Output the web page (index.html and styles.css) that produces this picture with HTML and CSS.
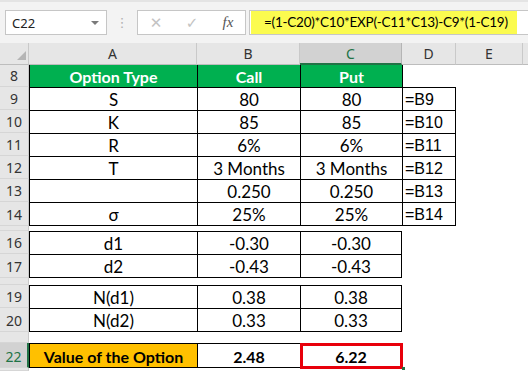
FILE: index.html
```html
<!DOCTYPE html>
<html lang="en">
<head>
    <meta charset="UTF-8">
    <title>Option Value</title>
    <link rel="stylesheet" href="styles.css">
</head>
<body>
    <div class="ribbon">
        <div class="namebox"><span>C22</span><span class="caret"></span></div>
        <div class="grip">⋮</div>
        <div class="fbtns">
            <span class="btn-x">✕</span>
            <span class="btn-ok">✓</span>
            <span class="btn-fx">fx</span>
        </div>
        <div class="fbar"><span class="ftext">=(1-C20)*C10*EXP(-C11*C13)-C9*(1-C19)</span></div>
    </div>

    <div class="sheet">
        <!-- column headers -->
        <div class="corner"><svg width="9" height="9" viewBox="0 0 9 9"><path d="M9 0 L9 9 L0 9 Z" fill="#b5b5b5"/></svg></div>
        <div class="ch">A</div>
        <div class="ch">B</div>
        <div class="ch sel">C</div>
        <div class="ch">D</div>
        <div class="ch">E</div>
        <div class="ch last"></div>

        <!-- 8 -->
        <div class="rh">8</div>
        <div class="c hd bl">Option Type</div>
        <div class="c hd bl">Call</div>
        <div class="c hd bl">Put</div>
        <div class="bl"></div><div></div><div></div>

        <div class="rh">9</div>
        <div class="c bd">S</div>
        <div class="c bd">80</div>
        <div class="c bd">80</div>
        <div class="d bd br">=B9</div><div></div><div></div>

        <div class="rh">10</div>
        <div class="c bd">K</div>
        <div class="c bd">85</div>
        <div class="c bd">85</div>
        <div class="d bd br">=B10</div><div></div><div></div>

        <div class="rh">11</div>
        <div class="c bd">R</div>
        <div class="c bd">6%</div>
        <div class="c bd">6%</div>
        <div class="d bd br">=B11</div><div></div><div></div>

        <div class="rh">12</div>
        <div class="c bd">T</div>
        <div class="c bd">3 Months</div>
        <div class="c bd">3 Months</div>
        <div class="d bd br">=B12</div><div></div><div></div>

        <div class="rh">13</div>
        <div class="c bd"></div>
        <div class="c bd">0.250</div>
        <div class="c bd">0.250</div>
        <div class="d bd br">=B13</div><div></div><div></div>

        <div class="rh">14</div>
        <div class="c bd bb">σ</div>
        <div class="c bd bb">25%</div>
        <div class="c bd bb">25%</div>
        <div class="d bd br bb">=B14</div><div></div><div></div>

        <div class="rh tiny"></div>
        <div></div><div></div><div></div><div></div><div></div><div></div>

        <div class="rh">16</div>
        <div class="c bd">d1</div>
        <div class="c bd">-0.30</div>
        <div class="c bd br">-0.30</div>
        <div></div><div></div><div></div>

        <div class="rh">17</div>
        <div class="c bd bb">d2</div>
        <div class="c bd bb">-0.43</div>
        <div class="c bd br bb">-0.43</div>
        <div></div><div></div><div></div>

        <div class="rh tiny"></div>
        <div></div><div></div><div></div><div></div><div></div><div></div>

        <div class="rh">19</div>
        <div class="c bd">N(d1)</div>
        <div class="c bd">0.38</div>
        <div class="c bd br">0.38</div>
        <div></div><div></div><div></div>

        <div class="rh">20</div>
        <div class="c bd bb">N(d2)</div>
        <div class="c bd bb">0.33</div>
        <div class="c bd br bb">0.33</div>
        <div></div><div></div><div></div>

        <div class="rh tiny"></div>
        <div></div><div></div><div></div><div></div><div></div><div></div>

        <div class="rh sel">22</div>
        <div class="c bd bb total">Value of the Option</div>
        <div class="c bd bb strong">2.48</div>
        <div class="c bd br bb strong active">6.22<span class="selbox"></span><span class="handle"></span></div>
        <div></div><div></div><div></div>

        <div class="rh"></div>
        <div></div><div></div><div></div><div></div><div></div><div></div>
    </div>
</body>
</html>
```

FILE: styles.css
```css
body {
    margin: 0;
    background: #fff;
    font-family: 'Lato', 'Liberation Sans', sans-serif;
    color: #000;
    overflow: hidden;
}

/* barra de fórmulas */
.ribbon {
    display: flex;
    align-items: flex-start;
    height: 43px;
    box-sizing: border-box;
    padding: 8px 0 0 5px;
    background: #f3f3f3;
    border-top: 2px solid #e4e4e4;
}

.namebox {
    width: 102px;
    height: 25px;
    box-sizing: border-box;
    border: 1px solid #c6c6c6;
    background: #fff;
    display: flex;
    align-items: center;
    justify-content: space-between;
    padding: 0 7px 0 6px;
    font-family: 'Noto Sans', sans-serif;
    font-size: 13px;
    color: #222;
}

.caret {
    width: 0;
    height: 0;
    border-left: 4px solid transparent;
    border-right: 4px solid transparent;
    border-top: 4px solid #7a7a7a;
}

.grip {
    width: 30px;
    height: 25px;
    line-height: 25px;
    text-align: center;
    color: #b0b0b0;
    font-family: 'DejaVu Sans', sans-serif;
    font-size: 13px;
}

.fbtns {
    width: 109px;
    height: 25px;
    box-sizing: border-box;
    border: 1px solid #c6c6c6;
    background: #fff;
    display: grid;
    grid-template-columns: 36px 36px 36px;
    align-items: center;
    justify-items: center;
}

.btn-x,
.btn-ok {
    color: #c3c3c3;
    font-family: 'DejaVu Sans', sans-serif;
    font-size: 15px;
}

.btn-fx {
    font-family: 'Liberation Serif', serif;
    font-style: italic;
    font-size: 15px;
    color: #555;
}

.fbar {
    flex: 1;
    height: 25px;
    margin-left: 3px;
    box-sizing: border-box;
    border: 1px solid #c6c6c6;
    border-right: none;
    background: #fff;
    padding-left: 1px;
}

.ftext {
    display: block;
    width: 266px;
    height: 23px;
    box-sizing: border-box;
    line-height: 23px;
    padding-left: 13px;
    background: #fbfb4f;
    font-size: 13.5px;
    letter-spacing: -0.25px;
    white-space: nowrap;
    overflow: hidden;
}

/* hoja */
.sheet {
    display: grid;
    grid-template-columns: 29px 168px 103px 102px 54px 67px 1fr;
    grid-template-rows: 22px 22px 23px 23px 23px 23px 23px 24px 5px 23px 24px 7px 23px 24px 11px 25px 1fr;
    height: 328px;
    font-size: 17px;
}

.sheet > div {
    box-sizing: border-box;
    min-width: 0;
    overflow: hidden;
}

.corner {
    background: #e6e6e6;
    border-right: 1px solid #c9c9c9;
    border-bottom: 1px solid #bdbdbd;
    display: flex;
    align-items: flex-end;
    justify-content: flex-end;
    padding: 0 2px 4px 0;
}

.ch {
    background: #e6e6e6;
    border-right: 1px solid #c9c9c9;
    border-bottom: 1px solid #bdbdbd;
    text-align: center;
    line-height: 21px;
    font-family: 'Noto Sans', sans-serif;
    font-size: 14px;
    color: #333;
}

.ch.sel {
    background: #d2d2d2;
    color: #217346;
    border-bottom: 2px solid #217346;
    border-right-color: #b5b5b5;
}

.ch.last {
    border-right: none;
}

.rh {
    background: #e6e6e6;
    border-right: 1px solid #c9c9c9;
    border-bottom: 1px solid #d6d6d6;
    display: flex;
    align-items: flex-end;
    justify-content: center;
    line-height: 21px;
    font-family: 'Noto Sans', sans-serif;
    font-size: 14px;
    color: #333;
}

.rh.sel {
    background: #d2d2d2;
    color: #217346;
    border-right: 2px solid #217346;
}

.c {
    display: flex;
    align-items: flex-end;
    justify-content: center;
    line-height: 21px;
    white-space: nowrap;
}

.d {
    display: flex;
    align-items: flex-end;
    padding-left: 2px;
    line-height: 21px;
    font-family: 'Liberation Sans', sans-serif;
    font-size: 16px;
}

.hd {
    background: #00b050;
    color: #fff;
    font-weight: bold;
    font-size: 16px;
}

.total {
    background: #ffc000;
    font-weight: bold;
    font-size: 16px;
}

.strong {
    font-weight: bold;
    font-size: 16px;
}

/* bordes de celda */
.bd {
    border-left: 1px solid #000;
    border-top: 1px solid #000;
}

.bl {
    border-left: 1px solid #000;
}

.br {
    border-right: 1px solid #000;
}

.bb {
    border-bottom: 1px solid #000;
}

.sheet > .active {
    position: relative;
    overflow: visible;
}

.selbox {
    position: absolute;
    left: -1px;
    top: -1px;
    right: -2px;
    bottom: -2px;
    border: 3px solid #e8000b;
}

.handle {
    position: absolute;
    right: -4px;
    bottom: -3px;
    width: 3px;
    height: 3px;
    background: #217346;
}
```
